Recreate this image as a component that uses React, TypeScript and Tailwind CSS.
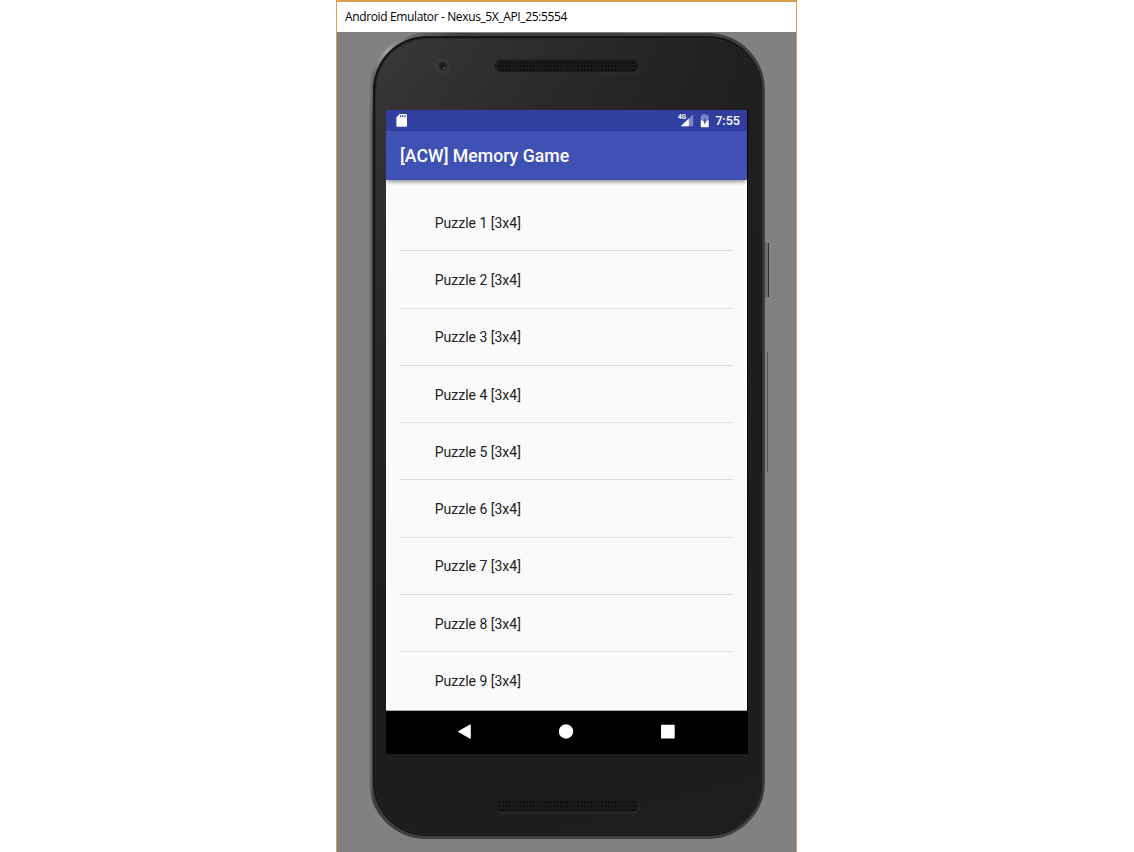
const puzzles = [1, 2, 3, 4, 5, 6, 7, 8, 9];

function Grille({ id }: { id: string }) {
  return (
    <svg width="146" height="15" viewBox="0 0 146 15" className="block">
      <defs>
        <pattern id={id} width="3.4" height="3.8" x="1" y="1.6" patternUnits="userSpaceOnUse">
          <rect width="1.6" height="1.7" x="0.7" y="1" fill="#050505" />
        </pattern>
      </defs>
      <rect x="1" y="1.2" width="144.5" height="13" rx="6.5" fill="#383838" />
      <rect x="0.5" y="0.5" width="144.5" height="13" rx="6.5" fill="#1b1b1b" />
      <rect x="3" y="1.6" width="140" height="11.4" rx="5" fill={`url(#${id})`} />
    </svg>
  );
}

function StatusBar() {
  return (
    <div className="flex h-[21px] shrink-0 items-center bg-[#303f9f] pl-[10px] pr-[7px] text-white">
      <svg width="12" height="14" viewBox="0 0 12 14">
        <path d="M3.6 0H9.7Q11 0 11 1.3V11.7Q11 12.8 9.8 12.8H1.5Q.4 12.8.4 11.7V3.5Z" fill="#fff" />
        <path d="M4 1.2h1.2v2.1H4zM6.2 1.2h1.2v2.1H6.2zM8.4 1.2h1.2v2.1H8.4z" fill="#303f9f" />
      </svg>
      <svg width="17" height="15" viewBox="0 0 17 15" className="ml-auto">
        <path d="M16.2 1.2V13.2H3.8Z" fill="#7e87c5" />
        <path d="M11.8 5.5V13.2H3.8Z" fill="#fff" />
        <rect x="0" y="0" width="9.2" height="6.8" fill="#303f9f" />
        <text x="0.9" y="6.4" fontSize="7.4" fontWeight="700" fill="#fff" fontFamily="Roboto, sans-serif" textLength="8.2" lengthAdjust="spacingAndGlyphs">4G</text>
      </svg>
      <svg width="9" height="14" viewBox="0 0 9 14" className="ml-[6px]">
        <path d="M.8 1.5H2.6V.3H6.6V1.5H8.7V6.5H.8Z" fill="#7e87c5" />
        <path d="M.8 6.4H8.7V13.2H.8Z" fill="#fff" />
        <path d="M5.4 3.5 2.8 7.6H4.3V10.8L6.8 6.5H5.4Z" fill="#303f9f" />
      </svg>
      <span className="ml-[6px] text-[12.6px] leading-[20px] font-medium">7:55</span>
    </div>
  );
}

function NavBar() {
  return (
    <div className="flex h-[42px] items-center justify-between bg-black pl-[71px] pr-[73px]">
      <svg width="15" height="16" viewBox="0 0 15 16">
        <path d="M1.4 7.6 13.3.8V14.4Z" fill="#fff" stroke="#fff" strokeWidth=".9" strokeLinejoin="round" />
      </svg>
      <svg width="15" height="16" viewBox="0 0 15 16">
        <circle cx="7" cy="7.5" r="7.2" fill="#fff" />
      </svg>
      <svg width="14" height="16" viewBox="0 0 14 16">
        <rect x="0" y=".8" width="13.7" height="13.7" rx=".8" fill="#fff" />
      </svg>
    </div>
  );
}

export default function App() {
  return (
    <div className="flex h-[852px] w-[1134px] justify-start overflow-hidden bg-white pl-[336px] font-[Roboto,sans-serif]">
      <div className="flex h-[852px] w-[461px] flex-col border-x border-t-2 border-[#d7a04e] bg-[#818181]">
        <div className="flex h-[30px] shrink-0 items-center bg-white pl-2 font-['Open_Sans','Noto_Sans',sans-serif] text-[12px] text-black">
          <span className="whitespace-nowrap tracking-[-0.37px]">Android Emulator - Nexus_5X_API_25:5554</span>
        </div>
        <div className="relative ml-[32px] mt-px h-[806px] w-[396px]">
          <div className="absolute left-[396px] top-[210px] h-[54px] w-[4px] border-r border-[#333] bg-[#6b6b6b]" />
          <div className="absolute left-[398px] top-[319px] h-[120px] w-px bg-[#555]" />
          <div className="h-full rounded-[57px] bg-[radial-gradient(circle_at_16px_16px,rgba(175,175,175,0.9)_0px,rgba(145,145,145,0.5)_30px,transparent_75px),linear-gradient(90deg,#777_0,#636363_2px,#3c3c3c_4px,#404040_10%,#404040_97%,#353335_393px,#444144_396px)] p-[3px] pl-[4px]">
            <div className="h-full rounded-[54px] bg-[#151515] p-[1.5px]">
              <div className="flex h-full flex-col rounded-[52px] border border-[#252525] bg-[linear-gradient(165deg,rgba(0,0,0,0)_0%,rgba(28,28,28,0.5)_25%,#1c1c1c_65%,#1e1e1f_100%),linear-gradient(90deg,#393939,#202020)]">
                <div className="flex h-[71.5px] shrink-0 pt-[20.5px] pl-[58.5px]">
                  <svg width="16" height="16" viewBox="0 0 16 16">
                    <circle cx="8" cy="7" r="7.5" fill="#393939" />
                    <circle cx="8.5" cy="7" r="4.8" fill="#2a2a2f" />
                    <circle cx="9" cy="7" r="2.9" fill="#1a1a22" />
                    <circle cx="10" cy="8.8" r=".9" fill="#8b6268" />
                  </svg>
                  <div className="ml-[44px]"><Grille id="top-dots" /></div>
                </div>
                <main className="ml-[10.5px] flex h-[643.5px] w-[362px] shrink-0 flex-col bg-black">
                  <div className="flex h-[601px] w-[361px] shrink-0 flex-col overflow-hidden border-b border-[#aaa] bg-[#fafafa]">
                    <StatusBar />
                    <header className="z-10 flex h-[49px] shrink-0 items-center bg-[#3f51b5] pl-[14px] pt-[2px] text-[17.7px] font-medium text-white shadow-[0_3px_4px_-1px_rgba(0,0,0,0.4)]">
                      [ACW] Memory Game
                    </header>
                    <ul className="mx-[14px] mt-[14px] text-[14px] text-[#212121]">
                      {puzzles.map((puzzle) => (
                        <li key={puzzle} className="flex h-[57.28px] items-center border-b border-[#dcdcdc] pl-[34.7px] pt-[2.2px] last:border-transparent">
                          Puzzle {puzzle} [3x4]
                        </li>
                      ))}
                    </ul>
                  </div>
                  <NavBar />
                </main>
                <div className="ml-[118.5px] mt-[45px]"><Grille id="bottom-dots" /></div>
              </div>
            </div>
          </div>
        </div>
      </div>
    </div>
  );
}
